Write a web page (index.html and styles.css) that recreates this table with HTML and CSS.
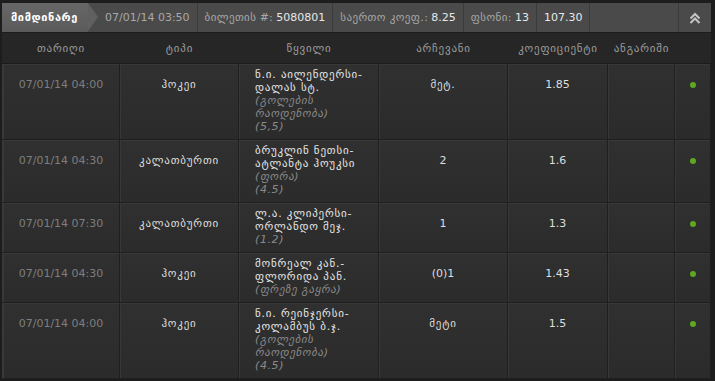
FILE: index.html
```html
<!DOCTYPE html>
<html lang="ka">
<head>
<meta charset="utf-8">
<title>Bet</title>
<link rel="stylesheet" href="styles.css">
</head>
<body>
<div class="wrap">
  <div class="bar">
    <div class="tab">მიმდინარე</div>
    <div class="seg">07/01/14 03:50</div>
    <div class="seg"><span class="lbl">ბილეთის</span> #: <span class="val">5080801</span></div>
    <div class="seg"><span class="lbl">საერთო კოეფ.</span>: <span class="val">8.25</span></div>
    <div class="seg"><span class="lbl">ფსონი</span>: <span class="val">13</span></div>
    <div class="seg"><span class="val">107.30</span></div>
    <div class="spacer"></div>
    <div class="toggle">
      <svg width="12" height="12" viewBox="0 0 12 12"><path d="M1.5 6.5 L6 2 L10.5 6.5 M1.5 11 L6 6.5 L10.5 11" fill="none" stroke="#c4c4c4" stroke-width="2"/></svg>
    </div>
  </div>
  <table class="grid">
    <colgroup>
      <col class="c1"><col class="c2"><col class="c3"><col class="c4"><col class="c5"><col class="c6"><col class="c7">
    </colgroup>
    <thead>
      <tr><th>თარიღი</th><th>ტიპი</th><th>წყვილი</th><th>არჩევანი</th><th>კოეფიციენტი</th><th>ანგარიში</th><th></th></tr>
    </thead>
    <tbody>
      <tr>
        <td class="date">07/01/14 04:00</td><td class="ka">ჰოკეი</td>
        <td class="match">ნ.ი. აილენდერსი-დალას სტ.<span class="sub">(გოლების რაოდენობა)</span><span class="sub">(5,5)</span></td>
        <td class="ka">მეტ.</td><td>1.85</td><td></td><td><span class="dot"></span></td>
      </tr>
      <tr>
        <td class="date">07/01/14 04:30</td><td class="ka">კალათბურთი</td>
        <td class="match">ბრუკლინ ნეთსი-ატლანტა ჰოუკსი<span class="sub">(ფორა)</span><span class="sub">(4.5)</span></td>
        <td>2</td><td>1.6</td><td></td><td><span class="dot"></span></td>
      </tr>
      <tr>
        <td class="date">07/01/14 07:30</td><td class="ka">კალათბურთი</td>
        <td class="match">ლ.ა. კლიპერსი-ორლანდო მეჯ.<span class="sub">(1.2)</span></td>
        <td>1</td><td>1.3</td><td></td><td><span class="dot"></span></td>
      </tr>
      <tr>
        <td class="date">07/01/14 04:30</td><td class="ka">ჰოკეი</td>
        <td class="match">მონრეალ კან.-ფლორიდა პან.<span class="sub">(ფრეზე გაყრა)</span></td>
        <td>(0)1</td><td>1.43</td><td></td><td><span class="dot"></span></td>
      </tr>
      <tr>
        <td class="date">07/01/14 04:00</td><td class="ka">ჰოკეი</td>
        <td class="match">ნ.ი. რეინჯერსი-კოლამბუს ბ.ჯ.<span class="sub">(გოლების რაოდენობა)</span><span class="sub">(4.5)</span></td>
        <td class="ka">მეტი</td><td>1.5</td><td></td><td><span class="dot"></span></td>
      </tr>
    </tbody>
  </table>
</div>
</body>
</html>
```
FILE: styles.css
```css
html, body {
  margin: 0;
  padding: 0;
  background: #1d1d1d;
}
body {
  font-family: "DejaVu Sans", "Noto Sans", sans-serif;
  font-size: 11px;
  color: #dcdcdc;
}
.wrap {
  padding: 3px 4px 2px 2px;
}
.ka {
  letter-spacing: 0.8px;
}
.lbl {
  letter-spacing: 0.4px;
}
.bar {
  display: flex;
  height: 29px;
  background: #4a4a4a;
  border-bottom: 1px solid #1c1c1c;
  align-items: stretch;
}
.tab {
  position: relative;
  display: flex;
  align-items: center;
  padding: 0 10px 0 9px;
  width: 67px;
  background: linear-gradient(#676767, #5a5a5a);
  color: #ffffff;
  font-weight: bold;
  letter-spacing: 0.6px;
  margin-right: 10px;
}
.tab::after {
  content: "";
  position: absolute;
  right: -10px;
  top: 0;
  border-top: 14.5px solid transparent;
  border-bottom: 14.5px solid transparent;
  border-left: 10px solid #606060;
}
.seg {
  display: flex;
  align-items: center;
  padding: 0 7px;
  color: #a8a8a8;
  border-right: 1px solid #3b3b3b;
  white-space: pre;
}
.seg .val {
  color: #e8e8e8;
}
.spacer {
  flex: 1;
  border-right: 1px solid #3b3b3b;
}
.toggle {
  width: 32px;
  display: flex;
  align-items: center;
  justify-content: center;
}
.grid {
  width: 709px;
  table-layout: fixed;
  border-collapse: separate;
  border-spacing: 0;
}
.c1 { width: 118px; }
.c2 { width: 119px; }
.c3 { width: 140px; }
.c4 { width: 129px; }
.c5 { width: 100px; }
.c6 { width: 67px; }
.c7 { width: 36px; }
.grid th {
  height: 30px;
  padding: 0;
  background: #262626;
  color: #9c9c9c;
  font-weight: normal;
  letter-spacing: 0.8px;
  text-align: center;
  vertical-align: middle;
  border-bottom: 1px solid #1b1b1b;
}
.grid td {
  padding: 14px 4px 6px;
  background: linear-gradient(#303030, #2b2b2b);
  text-align: center;
  vertical-align: top;
  line-height: 13px;
  color: #dedede;
  border-right: 1px solid #1f1f1f;
  border-bottom: 1px solid #1f1f1f;
  box-shadow: inset 1px 1px 0 #383838;
}
.grid td:first-child {
  border-left: 1px solid #3a3a3a;
}
.grid td.date {
  color: #7e7e7e;
}
.grid td.match {
  text-align: left;
  padding: 4px 6px 6px 16px;
  color: #e6e6e6;
  letter-spacing: 0.8px;
}
.sub {
  display: block;
  font-style: italic;
  color: #8a8a8a;
  letter-spacing: 0.6px;
}
.dot {
  display: inline-block;
  width: 6px;
  height: 6px;
  border-radius: 50%;
  background: #5ea71f;
  margin-top: 3px;
}
```
